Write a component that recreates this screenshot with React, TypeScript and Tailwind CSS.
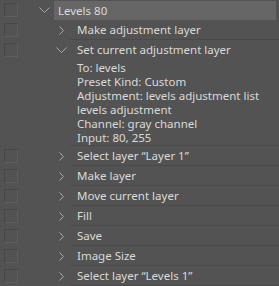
import React from 'react';

type Row = { label: string; open?: boolean; details?: string[] };

const rows: Row[] = [
    { label: 'Make adjustment layer' },
    {
        label: 'Set current adjustment layer',
        open: true,
        details: [
            'To: levels',
            'Preset Kind: Custom',
            'Adjustment: levels adjustment list',
            'levels adjustment',
            'Channel: gray channel',
            'Input: 80, 255',
        ],
    },
    { label: 'Select layer \u201cLayer 1\u201d' },
    { label: 'Make layer' },
    { label: 'Move current layer' },
    { label: 'Fill' },
    { label: 'Save' },
    { label: 'Image Size' },
    { label: 'Select layer \u201cLevels 1\u201d' },
];

function Check() {
    return (
        <div className="w-[14px] h-[14px] ml-[4px] shrink-0 border border-t-[#474747] border-l-[#474747] border-r-[#5e5e5e] border-b-[#5e5e5e]" />
    );
}

function ChevronDown({ className }: { className?: string }) {
    return (
        <svg width="11" height="6" viewBox="0 0 11 6" className={className}>
            <path d="M0.5 0.5 L5.5 5.5 L10.5 0.5" fill="none" stroke="#a8a8a8" strokeWidth="1" />
        </svg>
    );
}

function ChevronRight({ className }: { className?: string }) {
    return (
        <svg width="5" height="9" viewBox="0 0 5 9" className={className}>
            <path d="M0.5 0.5 L4.5 4.5 L0.5 8.5" fill="none" stroke="#a8a8a8" strokeWidth="1" />
        </svg>
    );
}

export default function App() {
    return (
        <div
            className="w-[279px] h-[286px] bg-[#535353] text-[#dadada] text-[11.5px] overflow-hidden"
            style={{ fontFamily: '"Noto Sans", "Open Sans", sans-serif' }}
        >
            {/* action header */}
            <div className="flex items-center h-[20px]">
                <Check />
                <div className="w-[36px] shrink-0 flex justify-end pr-[4px]">
                    <ChevronDown />
                </div>
                <div className="flex items-center flex-1 h-[19px] mt-[1px] mr-[3px] bg-[#666666] pl-[4px]">
                    Levels 80
                </div>
            </div>

            {rows.map((row, i) => (
                <div key={i}>
                    <div className="flex items-center h-[20px]">
                        <Check />
                        <div className={`w-[52px] shrink-0 flex ${row.open ? 'pl-[38px]' : 'pl-[41px]'}`}>
                            {row.open ? <ChevronDown /> : <ChevronRight />}
                        </div>
                        <div className={`flex items-center flex-1 h-[20px] pl-[7px] ${row.open ? '' : 'border-b border-[#4a4a4a]'}`}>
                            {row.label}
                        </div>
                    </div>
                    {row.details && (
                        <div className="ml-[70px] pt-[1px] border-b border-[#4a4a4a]">
                            {row.details.map(d => (
                                <div key={d} className="h-[14px] leading-[14px] pl-[7px]">{d}</div>
                            ))}
                        </div>
                    )}
                </div>
            ))}
        </div>
    );
}
